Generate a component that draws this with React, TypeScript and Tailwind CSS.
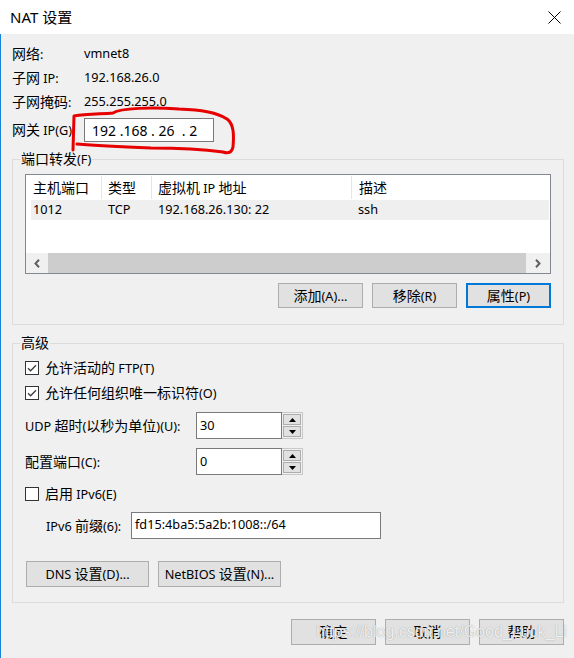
import React from 'react';

// CJK runs render a little larger than the Latin runs, like YaHei UI + Segoe UI
const CJK = /([\u3000-\u9fff\uff00-\uffef]+)/;
const T: React.FC<{ children: string }> = ({ children }) => (
  <>
    {children.split(CJK).map((p, i) =>
      p === '' ? null : CJK.test(p) ? (
        <span key={i} className="text-[14px]">{p}</span>
      ) : (
        <span key={i}>{p}</span>
      )
    )}
  </>
);

const Btn: React.FC<{ w?: string; primary?: boolean; h?: string; label: string }> = ({ w = 'w-[85px]', h = 'h-[26px]', primary, label }) => (
  <div
    className={`${w} ${h} flex items-center justify-center bg-[#e1e1e1] text-black ${
      primary ? 'border-2 border-[#0078d7]' : 'border border-[#adadad]'
    }`}
  >
    <span><T>{label}</T></span>
  </div>
);

const Check: React.FC<{ checked?: boolean }> = ({ checked }) => (
  <div className="w-[14px] h-[14px] border border-[#333] bg-white flex items-center justify-center shrink-0">
    {checked && (
      <svg width="12" height="12" viewBox="0 0 12 12">
        <path d="M2 6.2 L4.6 8.8 L10 3.2" fill="none" stroke="#3c3c3c" strokeWidth="1.3" />
      </svg>
    )}
  </div>
);

const Spin: React.FC<{ value: string }> = ({ value }) => (
  <div className="flex">
    <div className="w-[86px] h-[27px] border border-[#7a7a7a] bg-white flex items-center pl-[3px]">{value}</div>
    <div className="w-[21px] h-[27px] border border-[#c8c8c8] border-l-0 bg-[#f0f0f0] flex flex-col p-[1px] gap-[1px]">
      <div className="flex-1 bg-[#e1e1e1] border border-[#adadad] flex items-center justify-center">
        <svg width="7" height="4" viewBox="0 0 7 4"><path d="M0 4 L3.5 0 L7 4 Z" fill="#000" /></svg>
      </div>
      <div className="flex-1 bg-[#e1e1e1] border border-[#adadad] flex items-center justify-center">
        <svg width="7" height="4" viewBox="0 0 7 4"><path d="M0 0 L3.5 4 L7 0 Z" fill="#000" /></svg>
      </div>
    </div>
  </div>
);

const Group: React.FC<{ label: string; h: string; className?: string; children: React.ReactNode }> = ({ label, h, className = '', children }) => (
  <div className={`relative border border-[#dcdcdc] ${h} ${className}`}>
    <span className="absolute left-[7px] top-[-11px] px-[1px] bg-[#f0f0f0] leading-[20px]"><T>{label}</T></span>
    {children}
  </div>
);

export default function App() {
  return (
    <div className="w-[574px] h-[658px] flex flex-col font-['Noto_Sans','Noto_Sans_CJK_SC',sans-serif] text-[12.7px] text-black overflow-hidden">
      {/* title bar */}
      <div className="h-[34px] bg-white flex items-center justify-between pl-[10px] pr-[13px]">
        <span className="text-[15px]">NAT 设置</span>
        <svg width="13" height="13" viewBox="0 0 13 13">
          <path d="M0.5 0.5 L12.5 12.5 M12.5 0.5 L0.5 12.5" stroke="#000" strokeWidth="1" />
        </svg>
      </div>

      <div className="relative flex-1 flex flex-col bg-[#f0f0f0] border-l border-[#1883d7] pl-[11px] pr-[10px] pt-[10px]">
        {/* info rows */}
        <div className="flex flex-col gap-[4px]">
          <div className="flex items-center h-[20px]"><span className="w-[72px]"><T>网络:</T></span><span>vmnet8</span></div>
          <div className="flex items-center h-[20px]"><span className="w-[72px]"><T>子网 IP:</T></span><span>192.168.26.0</span></div>
          <div className="flex items-center h-[20px]"><span className="w-[72px]"><T>子网掩码:</T></span><span>255.255.255.0</span></div>
        </div>
        <div className="flex items-center h-[24px] mt-[6px]">
          <span className="w-[72px]"><T>网关 IP(G)</T></span>
          <div className="w-[130px] h-[24px] border border-[#7a7a7a] bg-white flex items-center pl-[7px] text-[14px] whitespace-pre">
            192 .168 . 26  . 2
          </div>
        </div>

        {/* port forwarding */}
        <Group label="端口转发(F)" h="h-[166px]" className="mt-[17px]">
          <div className="pt-[14px] pl-[12px] flex flex-col">
            <div className="w-[526px] h-[100px] border border-[#828790] bg-white flex flex-col">
              <div className="h-[25px] flex shrink-0">
                <div className="w-[76px] pl-[7px] flex items-center border-r border-[#e5e5e5] my-[1px]"><T>主机端口</T></div>
                <div className="w-[50px] pl-[6px] flex items-center border-r border-[#e5e5e5] my-[1px]"><T>类型</T></div>
                <div className="w-[200px] pl-[6px] flex items-center border-r border-[#e5e5e5] my-[1px]"><span><T>虚拟机 IP 地址</T></span></div>
                <div className="flex-1 pl-[7px] flex items-center"><T>描述</T></div>
              </div>
              <div className="h-[20px] flex pl-[5px] pr-[1px] shrink-0">
                <div className="flex-1 flex items-center bg-[#efefef]">
                  <span className="w-[77px] pl-[2px]">1012</span>
                  <span className="w-[50px]">TCP</span>
                  <span className="w-[200px]">192.168.26.130: 22</span>
                  <span>ssh</span>
                </div>
              </div>
              <div className="flex-1" />
              <div className="h-[20px] flex shrink-0">
                <div className="w-[22px] bg-[#f0f0f0] flex items-center justify-center">
                  <svg width="6" height="9" viewBox="0 0 6 9"><path d="M5 0.8 L1.5 4.5 L5 8.2" fill="none" stroke="#606060" strokeWidth="2" /></svg>
                </div>
                <div className="flex-1 bg-[#cdcdcd]" />
                <div className="w-[24px] bg-[#f0f0f0] flex items-center justify-center">
                  <svg width="6" height="9" viewBox="0 0 6 9"><path d="M1 0.8 L4.5 4.5 L1 8.2" fill="none" stroke="#606060" strokeWidth="2" /></svg>
                </div>
              </div>
            </div>
            <div className="w-[526px] flex justify-end gap-[9px] mt-[9px]">
              <Btn h="h-[25px]" label="添加(A)..." />
              <Btn h="h-[25px]" label="移除(R)" />
              <Btn h="h-[25px]" primary label="属性(P)" />
            </div>
          </div>
        </Group>

        {/* advanced */}
        <Group label="高级" h="h-[260px]" className="mt-[18px]">
          <div className="pt-[14px] pl-[12px] flex flex-col">
            <div className="h-[20px] flex items-center gap-[6px]"><Check checked /><span><T>允许活动的 FTP(T)</T></span></div>
            <div className="h-[20px] flex items-center gap-[6px] mt-[5px]"><Check checked /><span><T>允许任何组织唯一标识符(O)</T></span></div>
            <div className="flex items-center mt-[9px]">
              <span className="w-[171px]"><T>UDP 超时(以秒为单位)(U):</T></span>
              <Spin value="30" />
            </div>
            <div className="flex items-center mt-[9px]">
              <span className="w-[171px]"><T>配置端口(C):</T></span>
              <Spin value="0" />
            </div>
            <div className="h-[20px] flex items-center gap-[6px] mt-[9px]"><Check /><span><T>启用 IPv6(E)</T></span></div>
            <div className="flex items-center mt-[8px] pl-[21px]">
              <span className="w-[85px]"><T>IPv6 前缀(6):</T></span>
              <div className="w-[250px] h-[27px] border border-[#7a7a7a] bg-white pl-[3px] pt-[2px]">fd15:4ba5:5a2b:1008::/64</div>
            </div>
            <div className="flex gap-[9px] mt-[22px] ml-[1px]">
              <Btn w="w-[123px]" label="DNS 设置(D)..." />
              <Btn w="w-[123px]" label="NetBIOS 设置(N)..." />
            </div>
          </div>
        </Group>

        <div className="flex justify-end gap-[9px] mt-[16px]">
          <Btn label="确定" />
          <Btn label="取消" />
          <Btn label="帮助" />
        </div>

        {/* red hand-drawn mark */}
        <svg className="absolute left-[0px] top-[-34px] pointer-events-none" width="260" height="200" viewBox="0 0 260 200">
          <path
            d="M72 150 L73 116 C85 114 100 114 112 113 C120 108 150 107 178 109 C200 110 215 112 226 119 C233 124 233 135 232 147 C231 152 228 154 222 152 C200 149 175 148 150 148 C125 147 100 146 76 144"
            fill="none"
            stroke="#e60000"
            strokeWidth="3"
            strokeLinecap="round"
            strokeLinejoin="round"
          />
        </svg>

        {/* watermark */}
        <span className="absolute left-[315px] top-[586px] text-[16px] font-['Liberation_Sans',sans-serif] text-white/85 [text-shadow:0_0_1px_#888] pointer-events-none">
          https://blog.csdn.net/Good_Luck_Li
        </span>
      </div>
    </div>
  );
}
